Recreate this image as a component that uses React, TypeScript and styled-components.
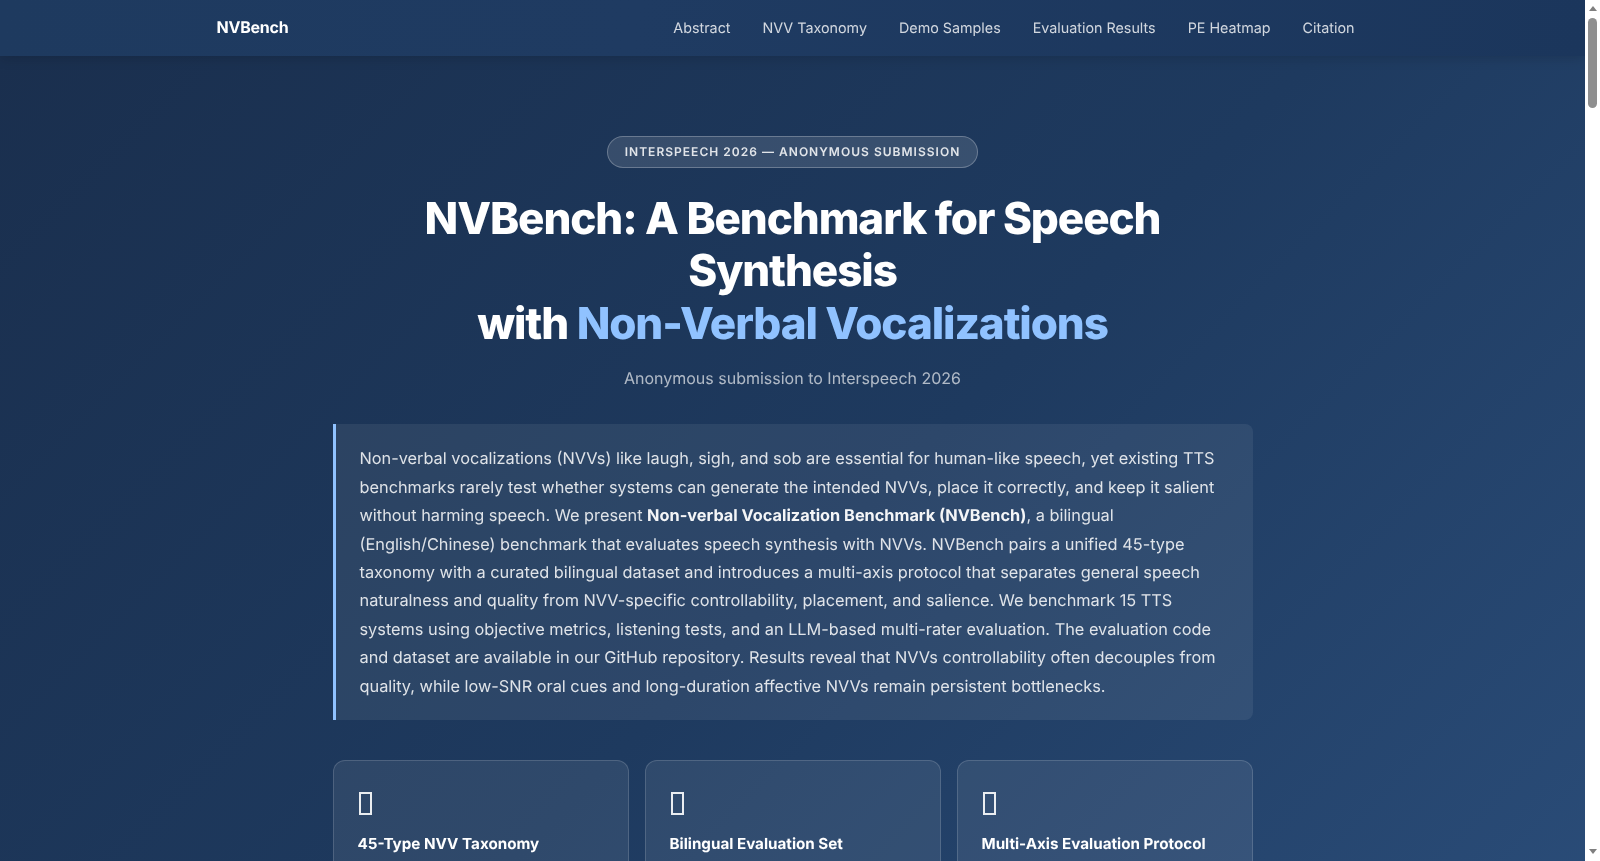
import React from 'react';
import styled, { createGlobalStyle } from 'styled-components';

const GlobalStyle = createGlobalStyle`
  * {
    box-sizing: border-box;
  }
  body {
    margin: 0;
    background-color: #f8fafc;
    font-family: 'Inter', 'Liberation Sans', sans-serif;
    text-rendering: geometricPrecision;
  }
`;

const Shell = styled.div`
  display: flex;
  height: 100vh;
  overflow: hidden;
`;

const Page = styled.div`
  flex: 1;
  min-width: 0;
  overflow: hidden;
  will-change: transform;
`;

const ScrollTrack = styled.div`
  flex: 0 0 15px;
  display: flex;
  flex-direction: column;
  align-items: center;
  padding-top: 6px;
  background-color: #fff;
`;

const ArrowUp = styled.div`
  width: 0;
  height: 0;
  border-left: 4.5px solid transparent;
  border-right: 4.5px solid transparent;
  border-bottom: 5px solid #7f7f7f;
`;

const ArrowDown = styled(ArrowUp)`
  margin-top: auto;
  margin-bottom: 7px;
  transform: rotate(180deg);
`;

const ScrollThumb = styled.div`
  width: 9px;
  height: 90px;
  margin-top: 7px;
  border-radius: 5px;
  background-color: #8f8f8f;
`;

const Nav = styled.nav`
  position: relative;
  z-index: 10;
  height: 56px;
  background: linear-gradient(100deg, #1e3a5f 0%, #1f3b62 40%, #1b365c 100%);
  box-shadow: 0 2px 12px rgba(0, 0, 0, 0.15);
`;

const NavInner = styled.div`
  max-width: 1200px;
  height: 100%;
  margin: 0 auto;
  padding: 0 24px;
  display: flex;
  align-items: center;
  justify-content: space-between;
`;

const Brand = styled.a`
  padding-bottom: 2px;
  color: #fff;
  font-size: 16px;
  font-weight: 700;
  letter-spacing: -0.015em;
`;

const NavLinks = styled.div`
  display: flex;
  gap: 32px;
  padding-right: 14px;
`;

const NavLink = styled.a`
  color: rgba(255, 255, 255, 0.8);
  font-size: 14.32px;
  font-weight: 400;
`;

const Hero = styled.header`
  padding: 80px 24px 64px;
  background: linear-gradient(135deg, #1a2f4e 0%, #1e3a5f 50%, #2c4f7c 100%);
  color: #fff;
  text-align: center;
`;

const Badge = styled.span`
  display: inline-block;
  padding: 8px 17px;
  border: 1px solid rgba(255, 255, 255, 0.25);
  border-radius: 20px;
  background: rgba(255, 255, 255, 0.12);
  color: rgba(255, 255, 255, 0.85);
  font-size: 12px;
  font-weight: 600;
  line-height: 14px;
  letter-spacing: 0.085em;
  text-transform: uppercase;
`;

const Title = styled.h1`
  max-width: 800px;
  margin: 24px auto 19px;
  font-size: 44px;
  font-weight: 800;
  line-height: 52.4px;
  letter-spacing: -0.025em;
`;

const Accent = styled.span`
  color: #90c2ff;
`;

const Subtitle = styled.p`
  margin: 0 0 36px;
  color: rgba(255, 255, 255, 0.65);
  font-size: 16px;
`;

const AbstractBox = styled.div`
  max-width: 920px;
  margin: 0 auto 40px;
  padding: 20px 24px;
  border-left: 3px solid #90c2ff;
  border-radius: 0 8px 8px 0;
  background: rgba(255, 255, 255, 0.07);
  color: rgba(255, 255, 255, 0.85);
  font-size: 16.32px;
  line-height: 28.44px;
  text-align: left;

  strong {
    color: rgba(255, 255, 255, 0.95);
    font-weight: 700;
  }
`;

const CardGrid = styled.div`
  max-width: 920px;
  margin: 0 auto;
  display: grid;
  grid-template-columns: repeat(3, 1fr);
  gap: 16px;
`;

const Card = styled.div`
  min-height: 280px;
  padding: 24px;
  border: 1px solid rgba(255, 255, 255, 0.15);
  border-radius: 12px;
  background: rgba(255, 255, 255, 0.08);
  text-align: left;
`;

// the reference shows a missing-glyph box where the icon would be
const MissingGlyph = styled.div`
  width: 13px;
  height: 23px;
  margin: 7px 0 19px 1px;
  border: 2px solid rgba(255, 255, 255, 0.9);
`;

const CardTitle = styled.h3`
  margin: 0;
  font-size: 15.2px;
  font-weight: 700;
`;

const links = ['Abstract', 'NVV Taxonomy', 'Demo Samples', 'Evaluation Results', 'PE Heatmap', 'Citation'];

const cards = ['45-Type NVV Taxonomy', 'Bilingual Evaluation Set', 'Multi-Axis Evaluation Protocol'];

const App = () => {
  return (
    <Shell>
      <GlobalStyle />
      <Page>
        <Nav>
          <NavInner>
            <Brand>NVBench</Brand>
            <NavLinks>
              {links.map((link) => (
                <NavLink key={link}>{link}</NavLink>
              ))}
            </NavLinks>
          </NavInner>
        </Nav>
        <Hero>
          <Badge>Interspeech 2026 — Anonymous Submission</Badge>
          <Title>
            NVBench: A Benchmark for Speech Synthesis
            <br />
            with <Accent>Non-Verbal Vocalizations</Accent>
          </Title>
          <Subtitle>Anonymous submission to Interspeech 2026</Subtitle>
          <AbstractBox>
            Non-verbal vocalizations (NVVs) like laugh, sigh, and sob are essential for human-like speech, yet existing
            TTS benchmarks rarely test whether systems can generate the intended NVVs, place it correctly, and keep it
            salient without harming speech. We present <strong>Non-verbal Vocalization Benchmark (NVBench)</strong>, a
            bilingual (English/Chinese) benchmark that evaluates speech synthesis with NVVs. NVBench pairs a unified
            45-type taxonomy with a curated bilingual dataset and introduces a multi-axis protocol that separates
            general speech naturalness and quality from NVV-specific controllability, placement, and salience. We
            benchmark 15 TTS systems using objective metrics, listening tests, and an LLM-based multi-rater evaluation.
            The evaluation code and dataset are available in our GitHub repository. Results reveal that NVVs
            controllability often decouples from quality, while low-SNR oral cues and long-duration affective NVVs
            remain persistent bottlenecks.
          </AbstractBox>
          <CardGrid>
            {cards.map((title) => (
              <Card key={title}>
                <MissingGlyph />
                <CardTitle>{title}</CardTitle>
              </Card>
            ))}
          </CardGrid>
        </Hero>
      </Page>
      <ScrollTrack>
        <ArrowUp />
        <ScrollThumb />
        <ArrowDown />
      </ScrollTrack>
    </Shell>
  );
};

export default App;
